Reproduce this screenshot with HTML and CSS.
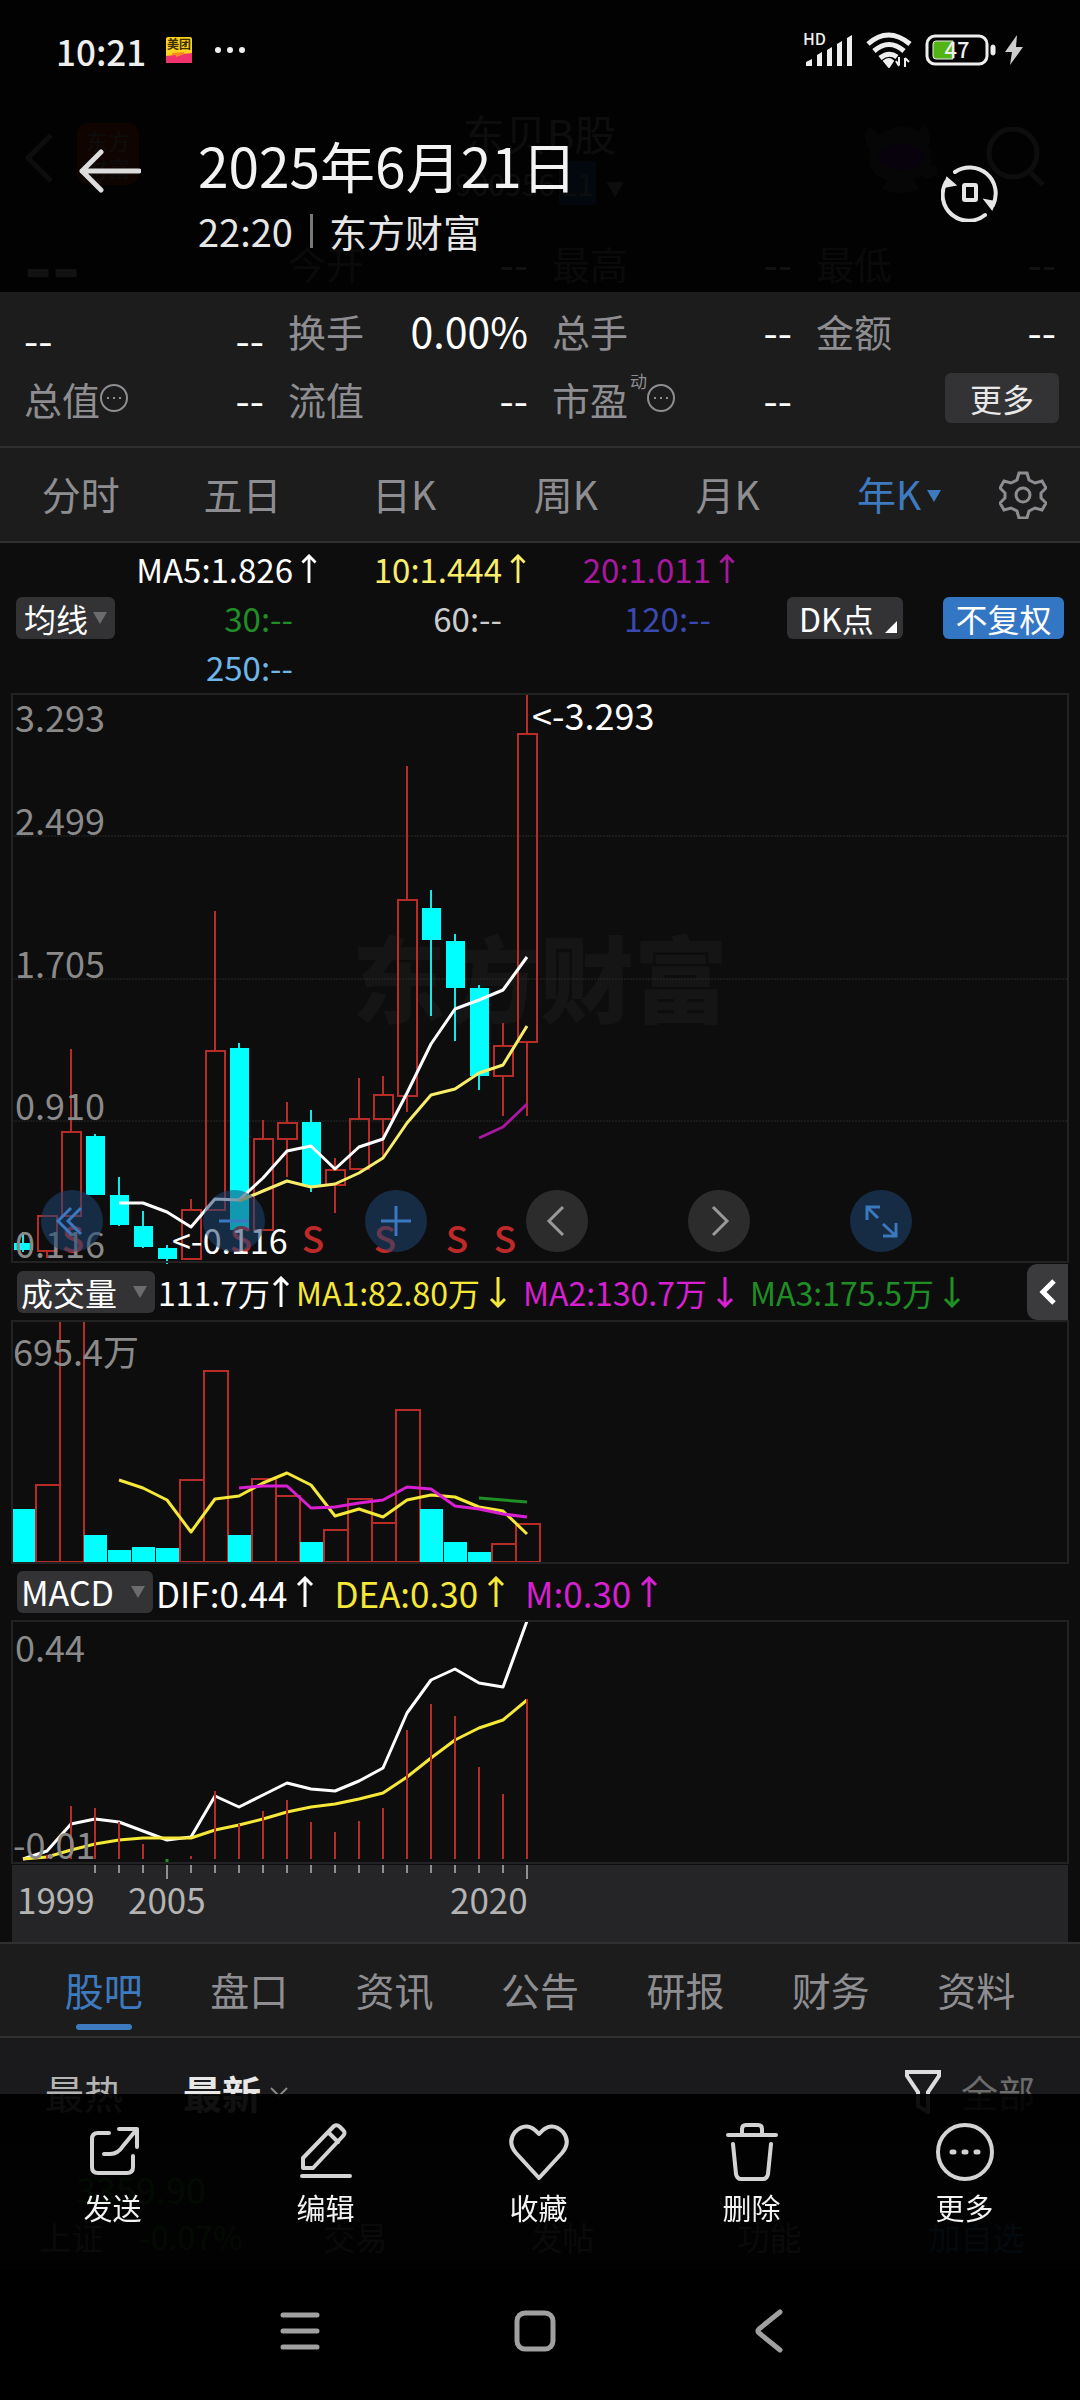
FILE: index.html
```html
<!DOCTYPE html>
<html lang="zh-CN">
<head>
  <meta charset="utf-8">
  <meta name="viewport" content="width=device-width, initial-scale=1">
  <title>东贝B股</title>
  <link rel="stylesheet" href="styles.css">
</head>

<body>
  <!-- shared shapes -->
  <svg class="defs" aria-hidden="true">
    <symbol id="up" viewBox="0 0 18 32"><path d="M9 31V2M2 9l7-7 7 7" /></symbol>
    <symbol id="down" viewBox="0 0 18 32"><path d="M9 1v29M2 23l7 7 7-7" /></symbol>
    <symbol id="info" viewBox="0 0 28 28"><circle cx="14" cy="14" r="13" /><path d="M7 14h2M13 14h2M19 14h2" /></symbol>
  </svg>

  <div class="app">
    <div class="app-status"></div>
    <header class="app-header">
      <svg class="app-back" viewBox="0 0 28 50"><path d="M26 2 3 25l23 23" /></svg>
      <div class="app-logo">东方<br>财富</div>
      <div class="app-title">
        <h1>东贝B股</h1>
        <p>900956<b>L1</b><i>▼</i></p>
      </div>
      <svg class="robot" viewBox="0 0 76 70">
        <path d="M6 26Q-4 12 6 4q6 6 10 8Q36-2 54 8q4-2 4-8 12 10 6 22 10 24-8 32-26 10-44-2Q2 42 6 26z" />
        <path d="M26 54l-8 12q22 8 36 0l-6-14zM56 44l16-2 2 10-14 4z" />
        <ellipse cx="38" cy="34" rx="24" ry="13" class="face" />
      </svg>
      <svg class="search" viewBox="0 0 62 62"><circle cx="27" cy="26" r="24" /><path d="m43 44 14 14" /></svg>
    </header>

    <section class="quote">
      <div class="quote-cell"><strong>--</strong></div>
      <div class="quote-cell"><span>今开</span><b>--</b></div>
      <div class="quote-cell"><span>最高</span><b>--</b></div>
      <div class="quote-cell"><span>最低</span><b>--</b></div>

      <div class="quote-cell change"><b>--</b><b>--</b></div>
      <div class="quote-cell"><span>换手</span><b>0.00%</b></div>
      <div class="quote-cell"><span>总手</span><b>--</b></div>
      <div class="quote-cell"><span>金额</span><b>--</b></div>

      <div class="quote-cell"><span>总值<svg class="info"><use href="#info" /></svg></span><b>--</b></div>
      <div class="quote-cell"><span>流值</span><b>--</b></div>
      <div class="quote-cell"><span>市盈<sup>动</sup><svg class="info"><use href="#info" /></svg></span><b>--</b></div>
      <div class="quote-cell more-cell"><button class="more">更多</button></div>
    </section>

    <nav class="periods">
      <button>分时</button>
      <button>五日</button>
      <button>日K</button>
      <button>周K</button>
      <button>月K</button>
      <button class="active">年K<i></i></button>
      <button class="gear" aria-label="设置">
        <svg viewBox="0 0 48 48">
          <path d="M20 2h8l2 7 6 3 7-2 4 7-5 5v5l5 5-4 7-7-2-6 3-2 7h-8l-2-7-6-3-7 2-4-7 5-5v-5l-5-5 4-7 7 2 6-3z" />
          <circle cx="24" cy="24" r="7" />
        </svg>
      </button>
    </nav>

    <section class="averages">
      <button class="chip ma-chip">均线<i class="caret"></i></button>
      <div class="ma-grid">
        <span class="white">MA5:1.826<svg><use href="#up" /></svg></span>
        <span class="yellow">10:1.444<svg><use href="#up" /></svg></span>
        <span class="purple">20:1.011<svg><use href="#up" /></svg></span>
        <span class="green">30:--</span>
        <span class="silver">60:--</span>
        <span class="blue">120:--</span>
        <span class="sky">250:--</span>
      </div>
      <button class="chip dk-chip">DK点<i></i></button>
      <button class="chip adjust">不复权</button>
    </section>

    <section class="charts">
      <div class="frame">
        <svg id="kline" viewBox="0 0 1056 568">
          <text x="340" y="322" class="watermark">东方财富</text>
          <path d="M0 142H1056M0 285H1056M0 427H1056" class="grid" />
          <g class="plot"></g>
          <g class="scale">
            <text x="3" y="38">3.293</text>
            <text x="3" y="141">2.499</text>
            <text x="3" y="284">1.705</text>
            <text x="3" y="426">0.910</text>
            <text x="3" y="564">0.116</text>
          </g>
          <text x="520" y="36" class="mark">&lt;-3.293</text>
          <text x="160" y="560" class="mark low">&lt;-0.116</text>
        </svg>
        <div class="tools">
          <button class="tint" aria-label="快退"><svg viewBox="0 0 62 62"><path d="M30 18 17 31l13 13M40 18 27 31l13 13" /></svg></button>
          <button class="tint" aria-label="缩小"><svg viewBox="0 0 62 62"><path d="M16 31h30" /></svg></button>
          <button class="tint" aria-label="放大"><svg viewBox="0 0 62 62"><path d="M16 31h30M31 16v30" /></svg></button>
          <button aria-label="左移"><svg viewBox="0 0 62 62"><path d="M37 17 23 31l14 14" /></svg></button>
          <button aria-label="右移"><svg viewBox="0 0 62 62"><path d="m25 17 14 14-14 14" /></svg></button>
          <button class="tint" aria-label="全屏"><svg viewBox="0 0 62 62"><path d="M17 30V17h13M17 17l11 11M46 33v13H33M46 46 33 34" /></svg></button>
        </div>
      </div>

      <div class="indicator">
        <button class="chip wide">成交量<i class="caret"></i></button>
        <span class="white total">111.7万<svg><use href="#up" /></svg></span>
        <span class="bright">MA1:82.80万<svg><use href="#down" /></svg></span>
        <span class="magenta">MA2:130.7万<svg><use href="#down" /></svg></span>
        <span class="green">MA3:175.5万<svg><use href="#down" /></svg></span>
        <button class="collapse" aria-label="收起"><svg viewBox="0 0 41 55"><path d="M27 17 16 28l11 11" /></svg></button>
      </div>
      <div class="frame">
        <svg id="volume" viewBox="0 0 1056 242">
          <g class="plot"></g>
          <g class="scale"><text x="1" y="45">695.4万</text></g>
        </svg>
      </div>

      <div class="indicator macd-bar">
        <button class="chip wide">MACD<i class="caret"></i></button>
        <span class="white">DIF:0.44<svg><use href="#up" /></svg></span>
        <span class="bright">DEA:0.30<svg><use href="#up" /></svg></span>
        <span class="magenta">M:0.30<svg><use href="#up" /></svg></span>
      </div>
      <div class="frame">
        <svg id="macd" viewBox="0 0 1056 242">
          <g class="plot"></g>
          <g class="scale">
            <text x="3" y="41">0.44</text>
            <text x="1" y="238">-0.01</text>
          </g>
        </svg>
      </div>
      <svg id="axis" class="axis" viewBox="0 0 1056 77">
        <g class="plot"></g>
        <text x="5" y="49">1999</text>
        <text x="116" y="49">2005</text>
        <text x="438" y="49">2020</text>
      </svg>
    </section>

    <nav class="sections">
      <a href="#" class="active">股吧</a>
      <a href="#">盘口</a>
      <a href="#">资讯</a>
      <a href="#">公告</a>
      <a href="#">研报</a>
      <a href="#">财务</a>
      <a href="#">资料</a>
    </nav>

    <div class="sort">
      <button>最热</button>
      <button class="newest">最新<svg viewBox="0 0 20 12"><path d="m2 2 8 8 8-8" /></svg></button>
      <button class="filter"><svg viewBox="0 0 36 44"><path d="M2 2h32v4L23 22v20l-10-6V22L2 6z" /></svg>全部</button>
    </div>
  </div>

  <footer class="app-bar">
    <div class="index"><b>3359.90</b><span>上证<em>-0.07%</em></span></div>
    <div>交易</div>
    <div>发帖</div>
    <div>功能</div>
    <div class="watch">加自选</div>
  </footer>

  <!-- gallery toolbar on top -->
  <div class="overlay-top">
    <div class="status">
      <span class="clock">10:21</span>
      <svg class="meituan" viewBox="0 0 26 26">
        <rect width="26" height="26" rx="2" fill="#ffd21e" />
        <path d="M0 19l26-3v10H0z" fill="#f0336d" />
        <path d="M6 17l12-1-8 3" fill="none" stroke="#ff8c1a" stroke-width="2" />
        <text x="1" y="12">美团</text>
      </svg>
      <svg class="dots" viewBox="0 0 32 8"><circle cx="4" cy="4" r="3" /><circle cx="16" cy="4" r="3" /><circle cx="28" cy="4" r="3" /></svg>
      <svg class="signal" viewBox="0 0 52 36">
        <text x="0" y="13">HD</text>
        <path d="M3 34v-4l6-3v7zM14 34V23l5-3v14zM24 34V18l5-3v19zM34 34V12l5-3v25zM44 34V6l5-3v31z" />
      </svg>
      <svg class="wifi" viewBox="0 0 48 36">
        <path d="M3 12q20-18 42 0M9 19q15-13 30 0M15 26q9-7 17-1" class="arc" />
        <path d="M24 35l-5-6q5-4 9 0zM34 33v-8M31 29l3 5M40 35v-9M40 26l4 4" class="dot" />
      </svg>
      <svg class="battery" viewBox="0 0 72 32">
        <rect x="2" y="2" width="60" height="28" rx="8" class="shell" />
        <path d="M8 10q0-3 3-3h17v18H11q-3 0-3-3z" fill="#52b415" />
        <rect x="66" y="11" width="4" height="10" rx="2" fill="#eee" />
        <text x="32" y="24">47</text>
      </svg>
      <svg class="bolt" viewBox="0 0 18 32"><path d="M12 1 0 18h7L5 31l13-18h-7z" /></svg>
    </div>
    <div class="photo-head">
      <button class="return" aria-label="返回"><svg viewBox="0 0 62 44"><path d="M22 3 3 22l19 19M3 22h57" /></svg></button>
      <div class="photo-info">
        <h2>2025年6月21日</h2>
        <p><span>22:20</span><span>东方财富</span></p>
      </div>
      <button class="rotate" aria-label="旋转">
        <svg viewBox="0 0 58 58">
          <path d="M14 8A26 26 0 0 1 52 41M44 51A26 26 0 0 1 5 18" />
          <rect x="23" y="21" width="12" height="15" rx="1" />
          <path d="M6 14l8 7-11 2zM44 36l10 2-3 7z" class="tip" />
        </svg>
      </button>
    </div>
  </div>

  <div class="overlay-bottom">
    <div class="actions">
      <button>
        <svg viewBox="0 0 60 60"><path d="M26 11H15q-6 0-6 6v28q0 6 6 6h29q6 0 6-6V34M36 7h18v18M54 7 40 24q-5 8-13 8h-6" /></svg>
        发送
      </button>
      <button>
        <svg viewBox="0 0 60 60"><path d="M7 46V36L38 4q3-2 6 1l3 3q3 3 0 6L17 46zM33 11l9 9M6 54h48" /></svg>
        编辑
      </button>
      <button>
        <svg viewBox="0 0 60 60"><path d="M30 56 7 31Q-2 20 6 10q12-12 24 2Q42-2 54 10q8 10-1 21z" /></svg>
        收藏
      </button>
      <button>
        <svg viewBox="0 0 60 60"><path d="M6 13h48M20 12V7q0-4 4-4h12q4 0 4 4v5M11 22l3 30q1 5 5 5h22q4 0 5-5l3-30" /></svg>
        删除
      </button>
      <button>
        <svg viewBox="0 0 60 60"><circle cx="30" cy="30" r="27" /><path d="M17 30h2M29 30h2M41 30h2" class="ellipsis" /></svg>
        更多
      </button>
    </div>
    <div class="system-nav">
      <button aria-label="最近任务"><svg viewBox="0 0 44 44"><path d="M5 6h34M5 22h34M5 38h34" /></svg></button>
      <button aria-label="主页"><svg viewBox="0 0 44 44"><rect x="4" y="4" width="36" height="36" rx="8" /></svg></button>
      <button aria-label="返回"><svg viewBox="0 0 44 44"><path d="M32 3 11 20q-2 2 0 4l21 17" /></svg></button>
    </div>
  </div>

  <script src="script.js"></script>
</body>
</html>
```
FILE: styles.css
```css
* {
  box-sizing: border-box;
}

body {
  margin: 0;
  min-height: 100vh;
  position: relative;
  overflow-x: hidden;
  background: #1a1a1c;
  color: #fff;
  font-family: "Noto Sans CJK SC", "Noto Sans", sans-serif;
}

button {
  padding: 0;
  border: 0;
  background: none;
  color: inherit;
  font: inherit;
}

a {
  color: inherit;
  text-decoration: none;
}

h1,
h2,
p {
  margin: 0;
  font-weight: 400;
}

i,
em {
  font-style: normal;
}

svg {
  display: block;
  fill: none;
  stroke: currentColor;
}

svg text {
  stroke: none;
}

.defs {
  position: absolute;
  width: 0;
  height: 0;
}

/* App header, dimmed by the overlay */
.app-status {
  height: 98px;
  background: #1c1c1c;
}

.app-header {
  display: flex;
  align-items: center;
  height: 120px;
  padding: 0 32px 0 25px;
  background: #1c1c1c;
  border-bottom: 1px solid #333;
  color: #bbb;
}

.app-back {
  width: 28px;
  height: 50px;
  stroke-width: 5;
}

.app-logo {
  width: 62px;
  height: 62px;
  margin: 0 0 8px 24px;
  padding-top: 4px;
  border-radius: 12px;
  background: #e03a10;
  font-size: 22px;
  line-height: 27px;
  text-align: center;
}

.app-title {
  flex: 1;
  padding-left: 76px;
  text-align: center;
}

.app-title h1 {
  font-size: 42px;
  line-height: 56px;
}

.app-title p {
  font-size: 30px;
  line-height: 44px;
}

.app-title b {
  margin: 0 10px 0 4px;
  padding: 0 2px;
  background: #3376c4;
  border-radius: 4px;
  font-weight: 400;
}

.app-title i {
  font-size: 18px;
}

.robot {
  width: 76px;
  height: 70px;
  margin-right: 46px;
  fill: #555;
  stroke: none;
}

.robot .face {
  fill: #63269a;
}

.search {
  width: 62px;
  height: 62px;
  stroke-width: 5;
}

/* Quote */
.quote {
  display: grid;
  grid-template-columns: repeat(4, 1fr);
  grid-auto-rows: 68px;
  align-items: center;
  height: 230px;
  padding: 10px 24px 0 0;
  background: #1c1c1c;
  border-bottom: 2px solid #303030;
}

.quote-cell {
  display: flex;
  justify-content: space-between;
  align-items: center;
  height: 68px;
  padding-left: 24px;
  font-size: 38px;
}

.quote-cell span {
  display: flex;
  align-items: center;
  color: #8e8e92;
}

.quote-cell b {
  font-size: 41px;
  font-weight: 400;
}

.quote-cell strong {
  font-size: 76px;
}

.change {
  padding-top: 16px;
}

.info {
  width: 28px;
  height: 28px;
  stroke-width: 2;
}

sup {
  align-self: flex-start;
  margin: 0 0 32px 2px;
  font-size: 17px;
  line-height: 20px;
}

.quote .more-cell {
  justify-content: flex-end;
  margin-right: -3px;
}

.more {
  width: 114px;
  height: 50px;
  border-radius: 6px;
  background: #333335;
  color: #e8e8e8;
  font-size: 32px;
  line-height: 50px;
}

/* Period tabs */
.periods {
  display: flex;
  height: 95px;
  padding-right: 110px;
  position: relative;
  background: #1c1c1c;
  border-bottom: 2px solid #303030;
  color: #8e8e92;
  font-size: 39px;
}

.periods button {
  flex: 1;
  padding-bottom: 3px;
}

.periods .active {
  color: #3e7ac0;
}

.periods .active i {
  display: inline-block;
  margin: 0 -20px 8px 6px;
  border: 7px solid transparent;
  border-top: 12px solid #3e7ac0;
  border-bottom: 0;
}

.periods .gear {
  position: absolute;
  right: 33px;
  top: 23px;
}

.gear svg {
  width: 48px;
  height: 48px;
  stroke-width: 3;
}

/* Moving averages */
.averages {
  display: flex;
  align-items: center;
  height: 151px;
  padding: 0 16px 1px;
  background: #0d0d0d;
}

.chip {
  display: flex;
  align-items: center;
  justify-content: space-between;
  height: 42px;
  padding: 0 8px;
  border-radius: 6px;
  background: #333335;
  color: #fff;
  font-size: 32px;
  line-height: 42px;
}

.ma-chip {
  width: 99px;
}

.caret {
  border: 7px solid transparent;
  border-top: 12px solid #6c6c6c;
  border-bottom: 0;
}

.ma-grid {
  display: grid;
  grid-template-columns: repeat(3, 209px);
  grid-auto-rows: 49px;
  align-items: center;
  font-size: 33px;
}

.ma-grid span {
  display: flex;
  align-items: center;
  justify-content: flex-end;
  padding-right: 31px;
}

.ma-grid svg {
  width: 18px;
  height: 30px;
  margin: 0 -25px 0 7px;
  stroke-width: 3;
}

.dk-chip {
  width: 116px;
  margin-left: auto;
  padding: 0 6px 0 12px;
}

.dk-chip i {
  align-self: flex-end;
  margin-bottom: 6px;
  border-left: 12px solid transparent;
  border-bottom: 12px solid #fff;
}

.adjust {
  width: 121px;
  margin-left: 40px;
  justify-content: center;
  background: #3376c4;
}

.white { color: #fff; }
.yellow { color: #f8ee6b; }
.bright { color: #f5e837; }
.purple { color: #a8179f; }
.magenta { color: #d81fd2; }
.green { color: #1f8f25; }
.silver { color: #ccc; }
.blue { color: #3a49b0; }
.sky { color: #6eb5ea; }

/* Charts */
.charts {
  padding: 0 12px;
  background: #0d0d0d;
}

.frame {
  position: relative;
  outline: 2px solid #222;
  outline-offset: -1px;
}

.frame > svg {
  width: 100%;
  height: auto;
  overflow: visible;
}

.scale text {
  fill: #8a8a8a;
  font-size: 36px;
}

.mark {
  fill: #fff;
  font-size: 36px;
}

.low {
  font-size: 34px;
}

.watermark {
  fill: #151515;
  font-size: 94px;
  font-weight: 900;
}

.grid {
  stroke: #2b2b2b;
  stroke-width: 1;
  stroke-dasharray: 2 1;
}

.rise {
  stroke: #b82c28;
  stroke-width: 2;
}

.fall {
  fill: #00ffff;
  stroke: none;
}

.fall-wick {
  stroke: #19e6e6;
  stroke-width: 2;
}

.dip {
  stroke: #1f8f25;
  stroke-width: 3;
}

.sell {
  fill: #bd2a28;
  font-size: 37px;
  font-weight: 500;
  text-anchor: middle;
}

.line {
  stroke: currentColor;
  stroke-width: 3;
  stroke-linejoin: round;
}

.tools {
  position: absolute;
  left: 29px;
  right: 156px;
  bottom: 10px;
  display: flex;
  justify-content: space-between;
}

.tools button {
  width: 62px;
  height: 62px;
  border-radius: 50%;
  background: rgba(50, 50, 50, .85);
  color: #999;
}

.tools .tint {
  background: rgba(31, 69, 114, .55);
  color: #3a78c0;
}

.tools svg {
  stroke-width: 3;
}

.indicator {
  display: flex;
  align-items: center;
  height: 59px;
  padding-left: 5px;
  font-size: 32px;
}

.indicator span {
  display: flex;
  align-items: center;
  margin-right: 16px;
  white-space: nowrap;
}

.indicator span svg {
  width: 18px;
  height: 32px;
  margin-left: 9px;
  stroke-width: 3;
}

.indicator .total {
  margin-right: 6px;
}

.indicator .total svg {
  margin-left: 2px;
}

.indicator.macd-bar {
  height: 58px;
  font-size: 35px;
}

.macd-bar span {
  margin-right: 20px;
}

.wide {
  width: 138px;
  margin-right: 3px;
  padding: 0 8px 0 4px;
}

.macd-bar .wide {
  width: 136px;
  font-size: 34px;
}

.collapse {
  width: 41px;
  height: 56px;
  margin-left: auto;
  border-radius: 10px 0 0 10px;
  background: #3b3b3d;
}

.collapse svg {
  stroke-width: 5;
}

.axis {
  width: 100%;
  height: auto;
  margin-top: 2px;
  background: #252527;
}

.axis text {
  fill: #b4b4b4;
  font-size: 35px;
}

.tick {
  stroke: #8f8f8f;
  stroke-width: 2;
}

/* Section tabs */
.sections {
  display: flex;
  height: 96px;
  padding: 0 31px;
  background: #1c1c1c;
  border-top: 2px solid #303030;
  border-bottom: 2px solid #303030;
  color: #8e8e92;
  font-size: 39px;
  line-height: 90px;
}

.sections a {
  flex: 1;
  position: relative;
  text-align: center;
}

.sections .active {
  color: #3e7ac0;
}

.sections .active::after {
  content: "";
  position: absolute;
  left: 50%;
  bottom: 6px;
  width: 56px;
  height: 6px;
  margin-left: -28px;
  border-radius: 3px;
  background: #3e7ac0;
}

.sort {
  display: flex;
  align-items: center;
  gap: 60px;
  padding: 26px 45px;
  color: #b4b4b4;
  font-size: 39px;
}

.sort button {
  display: flex;
  align-items: center;
}

.newest {
  color: #e8e8e8;
  font-weight: 700;
}

.newest svg {
  width: 20px;
  height: 12px;
  margin-left: 8px;
  stroke: #888;
  stroke-width: 2;
}

.filter {
  margin-left: auto;
  color: #6c6c6c;
  font-size: 37px;
}

.filter svg {
  width: 36px;
  height: 44px;
  margin-right: 20px;
  color: #ddd;
  stroke-width: 4;
}

/* Bottom bar of the app, dimmed */
.app-bar {
  position: fixed;
  left: 0;
  right: 0;
  bottom: 130px;
  display: grid;
  grid-template-columns: 252px repeat(4, 1fr);
  align-items: end;
  height: 125px;
  padding-bottom: 10px;
  background: #1c1c1c;
  color: #888;
  font-size: 32px;
  line-height: 48px;
  text-align: center;
}

.index {
  display: flex;
  flex-direction: column;
  padding-left: 30px;
}

.index b {
  color: #1f8f25;
  font-size: 36px;
  font-weight: 400;
}

.index em {
  margin-left: 36px;
  color: #1f8f25;
}

.watch {
  color: #3e7ac0;
}

/* Overlays */
.overlay-top {
  position: absolute;
  left: 0;
  right: 0;
  top: 0;
  height: 292px;
  background: rgba(0, 0, 0, .93);
}

.status {
  display: flex;
  align-items: center;
  height: 98px;
  padding: 2px 57px 0 56px;
  color: #eee;
}

.clock {
  font-size: 35px;
  font-weight: 500;
}

.meituan {
  width: 26px;
  height: 26px;
  margin-left: 20px;
  stroke: none;
}

.meituan text {
  fill: #3a2d00;
  font-size: 12px;
  font-weight: 700;
}

.dots {
  width: 32px;
  height: 8px;
  margin-left: 22px;
  fill: #eee;
  stroke: none;
}

.signal {
  width: 52px;
  height: 36px;
  margin-left: auto;
  fill: #eee;
  stroke: none;
  overflow: visible;
}

.signal text {
  font-size: 16px;
  font-weight: 500;
}

.wifi {
  width: 48px;
  height: 36px;
  margin-left: 10px;
}

.wifi .arc {
  stroke-width: 5;
}

.wifi .dot {
  fill: #eee;
  stroke-width: 2;
}

.battery {
  width: 72px;
  height: 32px;
  margin-left: 12px;
}

.battery .shell {
  stroke-width: 3;
}

.battery text {
  fill: #eee;
  font-size: 22px;
  font-weight: 500;
  text-anchor: middle;
}

.bolt {
  width: 18px;
  height: 32px;
  margin-left: 8px;
  fill: #ccc;
  stroke: none;
}

.photo-head {
  display: flex;
  align-items: flex-start;
  padding: 27px 81px 0 79px;
}

.return {
  margin-top: 24px;
}

.return svg {
  width: 62px;
  height: 44px;
  color: #ddd;
  stroke-width: 5;
  stroke-linecap: round;
  stroke-linejoin: round;
}

.photo-info {
  flex: 1;
  padding-left: 57px;
}

.photo-info h2 {
  color: #f3f3f3;
  font-size: 55px;
  line-height: 78px;
}

.photo-info p {
  display: flex;
  align-items: center;
  color: #e6e6e6;
  font-size: 38px;
  line-height: 56px;
}

.photo-info p span + span {
  margin-left: 17px;
  padding-left: 16px;
  border-left: 3px solid #777;
  line-height: 34px;
}

.rotate {
  margin-top: 39px;
}

.rotate svg {
  width: 58px;
  height: 58px;
  color: #e6e6e6;
  stroke-width: 4;
  stroke-linecap: round;
}

.rotate .tip {
  fill: #e6e6e6;
  stroke-width: 2;
}

.overlay-bottom {
  position: fixed;
  left: 0;
  right: 0;
  bottom: 0;
  height: 306px;
  background: rgba(0, 0, 0, .93);
}

.actions {
  display: flex;
  height: 176px;
  padding: 28px 9px 0 6px;
}

.actions button {
  flex: 1;
  display: flex;
  flex-direction: column;
  align-items: center;
  gap: 5px;
  color: #f3f3f3;
  font-size: 29px;
  line-height: 40px;
}

.actions svg {
  width: 60px;
  height: 60px;
  color: #d4d4d4;
  stroke-width: 4;
  stroke-linecap: round;
  stroke-linejoin: round;
}

.actions .ellipsis {
  stroke-width: 5;
}

.system-nav {
  display: flex;
  justify-content: center;
  align-items: center;
  gap: 191px;
  height: 130px;
  padding: 0 10px 8px 0;
  background: #000;
}

.system-nav svg {
  width: 44px;
  height: 44px;
  color: #a0a0a0;
  stroke-width: 5;
  stroke-linecap: round;
}
```
FILE: script.js
```js
var STEP = 24;
var START = 11;

// [rise, high, top, bottom, low] for each year
var candles = [
  [0, 538, 549, 556, 558], [1, 522, 522, 557, 564], [1, 355, 438, 522, 522],
  [0, 440, 442, 501, 501], [0, 483, 501, 531, 532], [0, 517, 532, 553, 554],
  [0, 551, 554, 565, 570], [1, 505, 516, 565, 565], [1, 217, 357, 516, 516],
  [0, 349, 354, 536, 536], [1, 426, 445, 536, 536], [1, 408, 429, 445, 483],
  [0, 416, 428, 492, 498], [1, 464, 476, 491, 519], [1, 384, 425, 475, 475],
  [1, 382, 401, 425, 464], [1, 72, 206, 402, 418], [0, 196, 214, 246, 322],
  [0, 240, 247, 294, 347], [0, 291, 294, 382, 396], [1, 329, 352, 382, 422],
  [1, 0, 40, 348, 422]
];
var volumes = [188, 164, 0, 214, 229, 226, 227, 159, 50, 214, 158, 175, 221, 209, 178, 202, 89, 188, 221, 231, 223, 203];
var bars = [238, 234, 185, 187, 201, 223, 242, 235, 170, 203, 190, 179, 201, 211, 200, 187, 109, 83, 95, 146, 173, 78];

function x(i) {
  return START + i * STEP;
}

function draw(id, markup) {
  document.querySelector("#" + id + " .plot").innerHTML = markup;
}

function line(from, ys, color) {
  var points = ys.map(function (y, i) { return x(from + i) + "," + y; });
  return '<polyline class="line ' + color + '" points="' + points.join(" ") + '" />';
}

function stem(cls, i, y1, y2) {
  return '<path class="' + cls + '" d="M' + x(i) + " " + y1 + "V" + y2 + '" />';
}

// yearly candles
var html = "";
candles.forEach(function (c, i) {
  var wick = c[0] ? "rise" : "fall-wick";
  html += stem(wick, i, c[1], c[2]) + stem(wick, i, c[3], c[4]);
  html += '<rect class="' + (c[0] ? "rise" : "fall") + '" x="' + (x(i) - 9) + '" y="' + c[2] +
    '" width="19" height="' + (c[3] - c[2]) + '" />';
});
[2, 9, 12, 15, 18, 20].forEach(function (i) {
  html += '<text class="sell" x="' + (x(i) + 2) + '" y="559">S</text>';
});
html += line(4, [509, 509, 518, 533, 505, 506, 484, 457, 452, 475, 453, 445, 399, 350, 315, 306, 296, 263], "white");
html += line(9, [507, 497, 487, 493, 490, 479, 464, 429, 401, 395, 379, 371, 332], "yellow");
html += line(19, [444, 433, 410], "purple");
draw("kline", html);

// volume
html = "";
volumes.forEach(function (top, i) {
  var rise = candles[i][0];
  html += '<rect class="' + (rise ? "rise" : "fall") + '" x="' + (x(i) - 11) + '" y="' + top +
    '" width="' + (rise ? 24 : 23) + '" height="' + (241 - top) + '" />';
});
html += line(4, [159, 167, 179, 211, 178, 175, 162, 152, 164, 195, 188, 196, 179, 174, 176, 186, 190, 213], "bright");
html += line(9, [167, 165, 165, 187, 186, 182, 179, 166, 168, 185, 188, 193, 196], "magenta");
html += line(19, [177, 179, 181], "green");
draw("volume", html);

// MACD
html = line(0, [238, 230, 203, 198, 201, 210, 219, 216, 175, 186, 174, 162, 168, 170, 160, 147, 92, 59, 48, 62, 66, 0], "white");
html += line(0, [238, 236, 229, 223, 219, 217, 217, 217, 209, 204, 198, 191, 186, 183, 178, 172, 156, 137, 119, 107, 99, 79], "bright");
bars.forEach(function (top, i) {
  html += stem(top > 238 ? "dip" : "rise", i, top, 238);
});
draw("macd", html);

// year ticks
html = "";
for (var i = 3; i < 22; i++) {
  html += stem("tick", i, 0, i === 6 || i === 21 ? 14 : 8);
}
draw("axis", html);
```
